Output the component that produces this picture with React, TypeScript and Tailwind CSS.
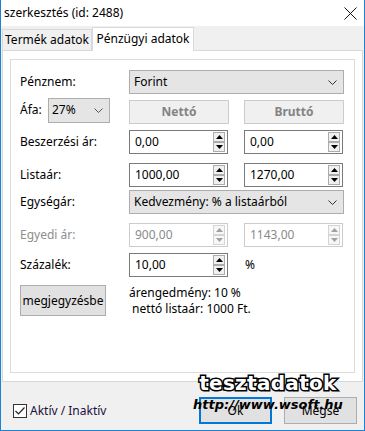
import React from "react";

function Chevron({ color = "#333" }: { color?: string }) {
  return (
    <svg width="9" height="5" viewBox="0 0 9 5" className="shrink-0">
      <path d="M0.5 0.5 L4.5 4.5 L8.5 0.5" fill="none" stroke={color} strokeWidth="1" />
    </svg>
  );
}

function Tri({ up, disabled }: { up?: boolean; disabled?: boolean }) {
  return (
    <div
      className={`flex h-[10px] w-[12px] items-center justify-center border ${
        disabled ? "border-[#d4d4d4] bg-[#f7f7f7]" : "border-[#acacac] bg-[#f0f0f0]"
      }`}
    >
      <svg width="7" height="4" viewBox="0 0 7 4">
        <path
          d={up ? "M0 4 L3.5 0 L7 4 Z" : "M0 0 L3.5 4 L7 0 Z"}
          fill={disabled ? "#a0a0a0" : "#000"}
        />
      </svg>
    </div>
  );
}

function Spin({ value, disabled }: { value: string; disabled?: boolean }) {
  return (
    <div
      className={`flex h-[24px] w-[99px] items-center border bg-white pl-[5px] pr-[2px] ${
        disabled ? "border-[#cccccc] text-[#8a8a8a]" : "border-[#7a7a7a] text-black"
      }`}
    >
      <span className="flex-1 leading-none">{value}</span>
      <div className="flex flex-col">
        <Tri up disabled={disabled} />
        <Tri disabled={disabled} />
      </div>
    </div>
  );
}

function Combo({ value, width }: { value: string; width: string }) {
  return (
    <div
      className={`flex h-[24px] ${width} items-center justify-between border border-[#adadad] bg-[#e5e5e5] pl-[4px] pr-[6px]`}
    >
      <span>{value}</span>
      <Chevron />
    </div>
  );
}

function Label({ children, disabled }: { children: React.ReactNode; disabled?: boolean }) {
  return (
    <div className={`w-[109px] shrink-0 ${disabled ? "text-[#8d8d8d]" : "text-black"}`}>{children}</div>
  );
}

export default function App() {
  return (
    <div className="relative flex h-[431px] w-[365px] flex-col border-x border-b border-[#1883d7] bg-[#f0f0f0] font-['Noto_Sans',sans-serif] text-[12px] text-black">
      {/* title bar */}
      <div className="flex h-[26px] shrink-0 items-center justify-between bg-white pl-[3px] pr-[7px]">
        <span className="text-[12px]">szerkesztés (id: 2488)</span>
        <svg width="13" height="13" viewBox="0 0 13 13">
          <path d="M0.5 0.5 L12.5 12.5 M12.5 0.5 L0.5 12.5" stroke="#111" strokeWidth="1" />
        </svg>
      </div>

      {/* tabs */}
      <div className="flex h-[24px] shrink-0 items-end pl-[1px]">
        <div className="flex h-[21px] w-[90px] items-center justify-center border border-b-0 border-[#d9d9d9] bg-[#f0f0f0]">
          Termék adatok
        </div>
        <div className="relative z-10 -mb-px flex h-[24px] w-[102px] items-center justify-center border border-b-0 border-[#d9d9d9] bg-white pb-[2px]">
          Pénzügyi adatok
        </div>
      </div>

      {/* panel */}
      <div className="mx-[1px] flex h-[332px] flex-col border border-[#d9d9d9] bg-white px-[7px] pt-[8px] pb-[8px]">
        <div className="flex flex-1 flex-col border border-[#dcdcdc] pl-[9px] pt-[10px]">
          {/* Pénznem */}
          <div className="flex h-[24px] items-center">
            <Label>Pénznem:</Label>
            <Combo value="Forint" width="w-[215px]" />
          </div>
          {/* Áfa */}
          <div className="mt-[3px] flex h-[26px] items-center">
            <div className="flex w-[109px] shrink-0 items-center">
              <span className="w-[28px]">Áfa:</span>
              <div className="flex h-[25px] w-[62px] items-center justify-between border border-[#adadad] bg-[#e5e5e5] pl-[3px] pr-[6px]">
                <span>27%</span>
                <Chevron color="#555" />
              </div>
            </div>
            <div className="mt-[3px] flex h-[24px] w-[100px] items-center justify-center border border-[#cccccc] bg-[#f0f0f0] font-bold text-[#838383]">
              Nettó
            </div>
            <div className="ml-[15px] mt-[3px] flex h-[24px] w-[100px] items-center justify-center border border-[#cccccc] bg-[#f0f0f0] font-bold text-[#838383]">
              Bruttó
            </div>
          </div>
          {/* Beszerzési ár */}
          <div className="mt-[7px] flex h-[24px] items-center">
            <Label>Beszerzési ár:</Label>
            <Spin value="0,00" />
            <div className="ml-[16px]">
              <Spin value="0,00" />
            </div>
          </div>
          {/* Listaár */}
          <div className="mt-[9px] flex h-[24px] items-center">
            <Label>Listaár:</Label>
            <Spin value="1000,00" />
            <div className="ml-[16px]">
              <Spin value="1270,00" />
            </div>
          </div>
          {/* Egységár */}
          <div className="mt-[3px] flex h-[24px] items-center">
            <Label>Egységár:</Label>
            <Combo value="Kedvezmény: % a listaárból" width="w-[215px]" />
          </div>
          {/* Egyedi ár */}
          <div className="mt-[9px] flex h-[24px] items-center">
            <Label disabled>Egyedi ár:</Label>
            <Spin value="900,00" disabled />
            <div className="ml-[16px]">
              <Spin value="1143,00" disabled />
            </div>
          </div>
          {/* Százalék */}
          <div className="mt-[6px] flex h-[24px] items-center">
            <Label>Százalék:</Label>
            <Spin value="10,00" />
            <span className="ml-[17px]">%</span>
          </div>
          {/* megjegyzésbe */}
          <div className="mt-[8px] flex items-start">
            <div className="flex h-[31px] w-[86px] items-center justify-center border border-[#adadad] bg-[#e1e1e1]">
              megjegyzésbe
            </div>
            <div className="ml-[23px] flex flex-col leading-[16px]">
              <span>árengedmény: 10 %</span>
              <span>&nbsp;nettó listaár: 1000 Ft.</span>
            </div>
          </div>
        </div>
      </div>

      {/* bottom */}
      <div className="flex flex-1 items-center pl-[12px] pr-[7px] pt-[9px]">
        <div className="flex items-center">
          <div className="flex h-[14px] w-[14px] items-center justify-center border border-[#333] bg-white">
            <svg width="10" height="8" viewBox="0 0 10 8">
              <path d="M0.5 4 L3.5 7 L9.5 0.5" fill="none" stroke="#222" strokeWidth="1.2" />
            </svg>
          </div>
          <span className="ml-[3px] text-[#1a1040]">Aktív / Inaktív</span>
        </div>
        <div className="ml-auto flex gap-[12px]">
          <div className="flex h-[27px] w-[73px] items-center justify-center border-2 border-[#0078d7] bg-[#e1e1e1]">
            Ok
          </div>
          <div className="flex h-[27px] w-[73px] items-center justify-center border border-[#adadad] bg-[#e1e1e1]">
            Mégse
          </div>
        </div>
      </div>

      {/* watermark */}
      <div className="pointer-events-none absolute left-[192px] top-[373px] flex flex-col items-center font-['DejaVu_Sans',sans-serif] font-bold leading-none">
        <span className="text-[20px] text-white [-webkit-text-stroke:3px_#000] [paint-order:stroke_fill] tracking-[0.3px]">
          tesztadatok
        </span>
        <span className="mt-[5px] text-[13px] italic text-black">http://www.wsoft.hu</span>
      </div>
    </div>
  );
}
